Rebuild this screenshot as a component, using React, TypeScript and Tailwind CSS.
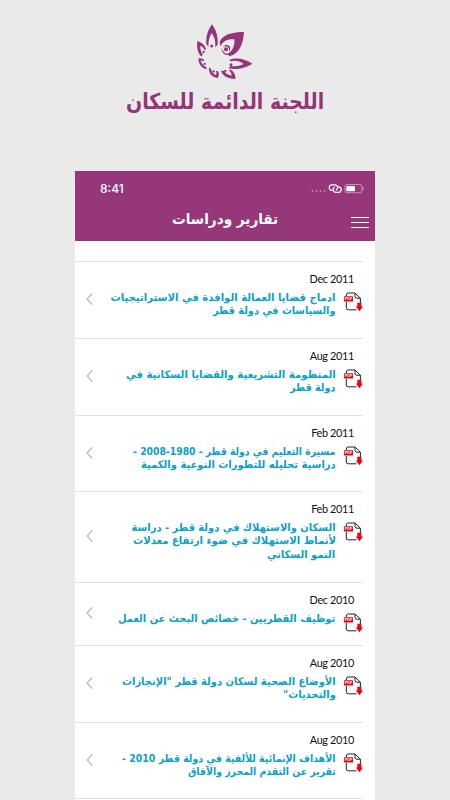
import { useLayoutEffect, useRef, useState } from "react";

type Line = { text: string; width: number };

type Report = {
  date: string;
  height: string;
  lines: Line[];
};

const reports: Report[] = [
  {
    date: "Dec 2011",
    height: "h-[77px]",
    lines: [
      { text: "ادماج قضايا العمالة الوافدة في الاستراتيجيات", width: 224.5 },
      { text: "والسياسات في دولة قطر", width: 123 },
    ],
  },
  {
    date: "Aug 2011",
    height: "h-[77px]",
    lines: [
      { text: "المنظومة التشريعية والقضايا السكانية في", width: 210 },
      { text: "دولة قطر", width: 45 },
    ],
  },
  {
    date: "Feb 2011",
    height: "h-[76px]",
    lines: [
      { text: "مسيرة التعليم في دولة قطر - 1980-2008 -", width: 202 },
      { text: "دراسية تحليله للتطورات النوعية والكمية", width: 195 },
    ],
  },
  {
    date: "Feb 2011",
    height: "h-[91px]",
    lines: [
      { text: "السكان والاستهلاك في دولة قطر - دراسة", width: 204.5 },
      { text: "لأنماط الاستهلاك في ضوء ارتفاع معدلات", width: 203 },
      { text: "النمو السكاني", width: 68 },
    ],
  },
  {
    date: "Dec 2010",
    height: "h-[63px]",
    lines: [{ text: "توظيف القطريين - خصائص البحث عن العمل", width: 217 }],
  },
  {
    date: "Aug 2010",
    height: "h-[77px]",
    lines: [
      { text: "الأوضاع الصحية لسكان دولة قطر \"الإنجازات", width: 214 },
      { text: "والتحديات\"", width: 53 },
    ],
  },
  {
    date: "Aug 2010",
    height: "h-[76px]",
    lines: [
      { text: "الأهداف الإنمائية للألفية في دولة قطر 2010 -", width: 213 },
      { text: "تقرير عن التقدم المحرز والآفاق", width: 148 },
    ],
  },
];

// Condenses a line horizontally so that it takes exactly `width` pixels.
function FitText({ text, width }: Line) {
  const ref = useRef<HTMLSpanElement>(null);
  const [scale, setScale] = useState(1);

  useLayoutEffect(() => {
    if (ref.current) setScale(width / ref.current.offsetWidth);
  }, [width, text]);

  return (
    <span className="block" style={{ width }}>
      <span
        ref={ref}
        className="inline-block origin-right whitespace-nowrap"
        style={{ transform: `scaleX(${scale})` }}
      >
        {text}
      </span>
    </span>
  );
}

function Logo() {
  return (
    <svg viewBox="0 0 240 210" className="h-[70px] w-[80px]" fill="#953579" fillRule="evenodd">
      <path d="M81 28C70 44 62 62 64 87L70 95C70 78 73 66 80 55C88 65 92 77 91 97L98 89C100 64 93 45 81 28Z" />
      <circle cx="80" cy="93" r="4.5" />
      <path d="M177 51C144 51 113 58 104 81L106 94C114 79 127 71 148 73C149 91 145 106 128 117L133 124C165 116 175 84 177 51Z" />
      <path d="M110 100C113 108 116 113 124 116C130 117 134 115 136 111C135 119 128 122 121 119C113 115 110 109 110 100Z" />
      <path d="M114 95C119 89 129 88 135 95C136 101 135 106 132 110C133 103 132 98 128 95C124 93 119 93 114 95Z" />
      <circle cx="123" cy="103" r="6" />
      <path d="M202 146C181 132 157 126 133 134L136 139C151 135 164 138 176 147C163 153 150 155 137 153L130 160C159 165 182 159 202 146Z" />
      <circle cx="138" cy="149" r="4.5" />
      <path d="M151 192C153 180 146 169 137 164L131 165C137 170 140 176 140 182C129 180 122 175 117 167L108 168C113 183 129 191 151 192Z" />
      <circle cx="121" cy="168" r="3.5" />
      <path d="M98 189C103 181 103 174 98 168L93 168C95 173 95 177 92 180C84 176 79 170 78 162L72 157C70 174 80 187 98 189Z" />
      <circle cx="86" cy="169" r="3.5" />
      <path d="M40 131C46 128 54 131 58 136L55 139C52 137 49 136 47 137C50 147 57 153 64 157L65 163C50 159 41 148 40 131Z" />
      <circle cx="59" cy="147" r="3.5" />
      <path d="M37 78C49 82 59 89 63 101L59 106C57 99 52 94 46 92C45 102 48 111 54 119L48 124C37 112 35 95 37 78Z" />
      <circle cx="56" cy="111" r="3.5" />
    </svg>
  );
}

function StatusIcons() {
  return (
    <svg viewBox="0 0 56 12" className="h-3 w-14" fill="none">
      <g fill="#bb7eaa">
        <circle cx="4.5" cy="8" r="1" />
        <circle cx="8.5" cy="8" r="1" />
        <circle cx="12.5" cy="8" r="1" />
        <circle cx="16.3" cy="8" r="1" />
      </g>
      <g stroke="#fff" strokeWidth="1.2" strokeLinecap="round">
        <path d="M24.5 7.3H23.5A2.8 2.8 0 0 1 23.5 1.8H27.2A2.8 2.8 0 0 1 28.2 7" />
        <path d="M29.6 3.8H31A2.8 2.8 0 0 1 31 9.3H27.4A2.8 2.8 0 0 1 26.3 4.2" />
      </g>
      <rect x="36.9" y="1.5" width="17" height="8.2" rx="2.2" stroke="#cf9fc1" strokeWidth=".9" />
      <rect x="38.3" y="2.9" width="8.7" height="5.4" rx=".8" fill="#fff" />
      <path d="M55.2 4.1V7" stroke="#cf9fc1" />
    </svg>
  );
}

function PdfIcon() {
  return (
    <svg viewBox="0 0 19 20" className="h-5 w-[19px]" fill="none">
      <path
        d="M2.3 4V3Q2.3 1 4.3 1H11L16.4 6.2V11M11 1V4.2Q11 6.2 13 6.2H16.4M2.3 10V16Q2.3 17.8 4.3 17.8H12.5"
        stroke="#222"
        strokeWidth="1"
      />
      <rect y="4.3" width="9" height="5.3" rx=".5" fill="#e30613" />
      <text x="4.5" y="8.4" textAnchor="middle" fontSize="3.7" fontWeight="700" fontFamily="Liberation Sans, sans-serif" fill="#fff">
        PDF
      </text>
      <path d="M13.3 10.7H17.4V14.4H19L15.4 19.2L11.8 14.4H13.3Z" fill="#e30613" />
    </svg>
  );
}

function ReportRow({ report }: { report: Report }) {
  return (
    <li className={`mr-3 flex items-center border-t border-[#e2e2e2] pl-[11px] ${report.height}`}>
      <svg viewBox="0 0 8 12" className="mb-0.5 h-3 w-2 shrink-0" fill="none">
        <path d="M6.4 .4L1.1 6L6.4 11.6" stroke="#b9b9b9" strokeWidth="1.3" />
      </svg>
      <div className="flex h-full flex-1 flex-col items-end">
        <p className="mt-[9px] mr-[9px] font-[Lato] text-[10.9px] leading-4 tracking-[-0.35px] text-[#111]">
          {report.date}
        </p>
        <div className="mt-[5px] mr-[0.5px] flex gap-2">
          <div
            dir="rtl"
            className="-mt-px font-['DejaVu_Sans',sans-serif] text-[10.7px] leading-[13.3px] font-bold text-[#0ba0ca]"
          >
            {report.lines.map((line) => (
              <FitText key={line.text} {...line} />
            ))}
          </div>
          <PdfIcon />
        </div>
      </div>
    </li>
  );
}

export default function App() {
  return (
    <div className="flex h-[800px] w-[450px] flex-col overflow-hidden bg-[#eaeaea]">
      <div className="flex h-[171px] shrink-0 flex-col items-center pt-[15px]">
        <Logo />
        <h1
          dir="rtl"
          className="mt-px font-['DejaVu_Sans',sans-serif] text-[22px] leading-[32px] font-bold text-[#953579]"
        >
          <FitText text="اللجنة الدائمة للسكان" width={198} />
        </h1>
      </div>

      <main className="ml-[75px] flex w-[300px] flex-1 flex-col bg-white">
        <header className="h-[70px] shrink-0 bg-[#963779] text-white">
          <div className="flex h-9 items-center justify-between pr-[11px] pl-[25px]">
            <span className="font-[Inter] text-[12px] font-medium">8:41</span>
            <StatusIcons />
          </div>
          <div className="grid h-[34px] grid-cols-[97px_1fr_auto] pr-[6px]">
            <span />
            <h2 dir="rtl" className="w-[106px] font-['DejaVu_Sans',sans-serif] text-[14.5px] leading-[25px] font-bold">
              <FitText text="تقارير ودراسات" width={106} />
            </h2>
            <div className="mt-[10px] flex w-[18px] flex-col gap-1">
              <span className="h-px bg-white" />
              <span className="h-px bg-white" />
              <span className="h-px bg-white" />
            </div>
          </div>
        </header>

        <ul className="pt-5">
          {reports.map((report) => (
            <ReportRow key={report.lines[0].text} report={report} />
          ))}
          <li className="mr-3 border-t border-[#e2e2e2]" />
        </ul>
      </main>
    </div>
  );
}
